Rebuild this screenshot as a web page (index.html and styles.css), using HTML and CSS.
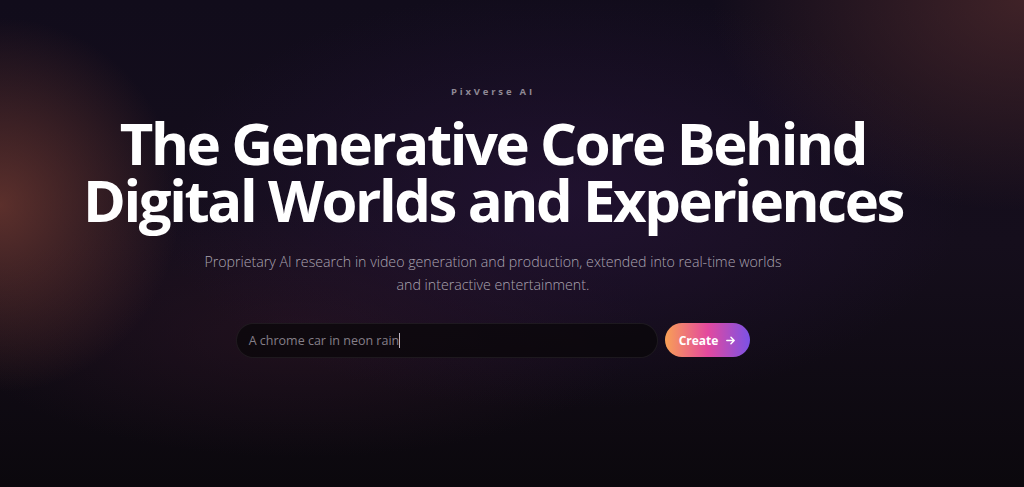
FILE: index.html
```html
<!DOCTYPE html>
<html lang="en">
<head>
  <meta charset="UTF-8">
  <title>PixVerse AI</title>
  <link rel="stylesheet" href="styles.css">
</head>
<body>
  <main class="hero">
    <div class="eyebrow">PixVerse AI</div>
    <h1>The Generative Core Behind<br>Digital Worlds and Experiences</h1>
    <p class="lead">Proprietary AI research in video generation and production, extended into real-time worlds<br>and interactive entertainment.</p>

    <form class="prompt" onsubmit="return false">
      <div class="prompt-field">
        <span class="prompt-text">A chrome car in neon rain</span><span class="caret"></span>
      </div>
      <button type="submit">
        Create
        <svg width="11" height="11" viewBox="0 0 12 12" fill="none" stroke="currentColor" stroke-width="1.6" stroke-linecap="round" stroke-linejoin="round">
          <path d="M2 6h8M6.5 2.5L10 6l-3.5 3.5"/>
        </svg>
      </button>
    </form>
  </main>
</body>
</html>
```

FILE: styles.css
```css
html, body {
  margin: 0;
  height: 100%;
}

body {
  font-family: "Open Sans", "Noto Sans", sans-serif;
  color: #fff;
  background:
    radial-gradient(ellipse 250px 260px at 0 205px, rgba(130, 66, 52, 0.65), transparent 72%),
    radial-gradient(ellipse 400px 270px at 1024px 0, rgba(88, 46, 46, 0.65), transparent 78%),
    radial-gradient(ellipse 540px 280px at 560px 200px, rgba(40, 20, 60, 0.6), transparent 75%),
    radial-gradient(ellipse 460px 170px at 300px 330px, rgba(48, 22, 38, 0.5), transparent 75%),
    linear-gradient(to bottom, #110c1b 0%, #150e1c 50%, #0b080d 100%);
  overflow: hidden;
}

.hero {
  display: flex;
  flex-direction: column;
  align-items: center;
  padding: 85px 38px 0 0;
}

.eyebrow {
  font-size: 9.5px;
  font-weight: 700;
  letter-spacing: 2.8px;
  color: #8f8995;
}

h1 {
  margin: 16px 0 0;
  font-size: 58px;
  line-height: 57px;
  font-weight: 700;
  letter-spacing: -2.4px;
  text-align: center;
}

.lead {
  margin: 22px 0 0;
  font-size: 14.2px;
  line-height: 23px;
  font-weight: 300;
  color: #aaa3b0;
  text-align: center;
}

.prompt {
  display: flex;
  gap: 7px;
  margin-top: 27px;
}

.prompt-field {
  width: 396px;
  height: 33px;
  padding: 0 12px;
  display: flex;
  align-items: center;
  border-radius: 18px;
  background: rgba(10, 7, 10, 0.75);
  border: 1px solid rgba(255, 255, 255, 0.07);
  font-size: 12.5px;
  color: #857f88;
}

.caret {
  width: 1px;
  height: 15px;
  background: #bdb6c2;
}

button {
  height: 34px;
  padding: 0 14px;
  display: flex;
  align-items: center;
  gap: 7px;
  border: none;
  border-radius: 17px;
  background: linear-gradient(to right, #f8a055, #e3499e 50%, #7b52e6);
  color: #fff;
  font-family: inherit;
  font-size: 12px;
  font-weight: 700;
  cursor: pointer;
}
```
